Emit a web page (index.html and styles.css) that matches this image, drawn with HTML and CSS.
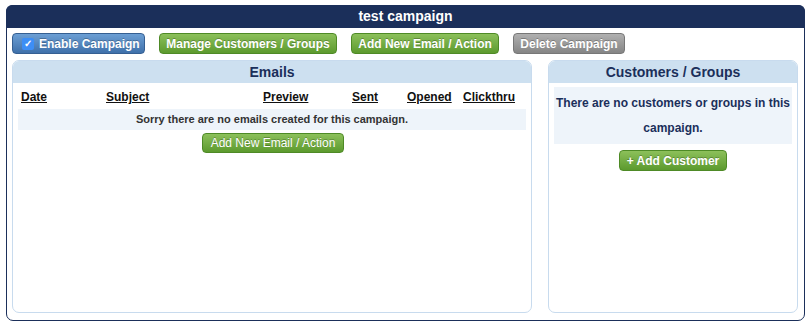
FILE: index.html
```html
<!DOCTYPE html>
<html>
<head>
<meta charset="utf-8">
<link rel="stylesheet" href="styles.css">
</head>
<body>
<div class="campaign">
  <div class="title">test campaign</div>
  <div class="toolbar">
    <button class="btn blue"><span class="check">&#10003;</span>Enable Campaign</button>
    <button class="btn green">Manage Customers / Groups</button>
    <button class="btn green">Add New Email / Action</button>
    <button class="btn grey">Delete Campaign</button>
  </div>
  <div class="panels">
    <div class="panel emails">
      <div class="panel-head">Emails</div>
      <div class="table">
        <div class="thead">
          <span>Date</span><span>Subject</span><span>Preview</span><span>Sent</span><span>Opened</span><span>Clickthru</span>
        </div>
        <div class="empty-row">Sorry there are no emails created for this campaign.</div>
      </div>
      <div class="center"><button class="btn green small">Add New Email / Action</button></div>
    </div>
    <div class="panel customers">
      <div class="panel-head">Customers / Groups</div>
      <div class="notice">There are no customers or groups in this campaign.</div>
      <div class="center"><button class="btn green cust">+ Add Customer</button></div>
    </div>
  </div>
</div>
</body>
</html>
```
FILE: styles.css
```css
* { box-sizing: border-box; }
body {
  margin: 0;
  background: #fff;
  font-family: "Liberation Sans", Arial, sans-serif;
}
.campaign {
  margin: 5px 0 0 6px;
  width: 799px;
  height: 316px;
  border: 1px solid #1b2f5a;
  border-radius: 7px;
  display: flex;
  flex-direction: column;
}
.title {
  background: #1b2f5a;
  color: #fff;
  font-weight: bold;
  font-size: 14px;
  text-align: center;
  height: 23px;
  line-height: 23px;
  border-radius: 6px 6px 0 0;
  margin: -1px -1px 0 -1px;
}
.toolbar {
  display: flex;
  gap: 14px;
  padding: 5px 0 0 5px;
}
.btn {
  font-family: "Liberation Sans", Arial, sans-serif;
  font-weight: bold;
  font-size: 12px;
  color: #fff;
  height: 21px;
  padding: 0 7px;
  border-radius: 4px;
  border: 1px solid;
  text-shadow: 0 -1px 0 rgba(0,0,0,0.25);
  display: inline-flex;
  align-items: center;
  white-space: nowrap;
  flex-shrink: 0;
}
.blue {
  background: linear-gradient(#6c9fd4, #3f70aa);
  border-color: #355f92;
  width: 133px;
  padding: 0 0 0 9px;
}
.check {
  display: inline-flex;
  width: 12px;
  height: 12px;
  background: #3d8ef5;
  border-radius: 2px;
  font-size: 10px;
  align-items: center;
  justify-content: center;
  margin-right: 5px;
  text-shadow: none;
}
.green {
  background: linear-gradient(#8cc05a, #5c9a2e);
  border-color: #4e8a26;
}
.grey {
  background: linear-gradient(#b0b0b0, #858585);
  border-color: #777;
}
.toolbar .green:nth-child(2) { width: 178px; justify-content: center; }
.toolbar .green:nth-child(3) { width: 148px; justify-content: center; }
.toolbar .grey { width: 112px; justify-content: center; }
.panels {
  display: flex;
  gap: 16px;
  padding: 6px 0 0 5px;
}
.panel {
  border: 1px solid #c8dbee;
  border-radius: 7px;
  height: 253px;
}
.emails { width: 520px; }
.customers { width: 250px; }
.panel-head {
  background: #cde0f0;
  color: #1b2f5a;
  font-weight: bold;
  font-size: 14px;
  text-align: center;
  height: 22px;
  line-height: 23px;
  border-radius: 6px 6px 0 0;
}
.table {
  margin: 6px 5px 0 5px;
}
.thead {
  display: grid;
  grid-template-columns: 85px 157px 89px 55px 56px 1fr;
  padding: 1px 0 0 3px;
  height: 20px;
  font-size: 12px;
  font-weight: bold;
  color: #111;
}
.thead span { text-decoration: underline; line-height: 14px; }
.empty-row {
  background: #eef4fa;
  height: 21px;
  line-height: 21px;
  text-align: center;
  font-size: 11px;
  font-weight: bold;
  color: #333;
}
.center {
  display: flex;
  justify-content: center;
}
.small {
  margin-top: 3px;
  font-weight: normal;
  height: 20px;
  width: 142px;
  justify-content: center;
  font-size: 12px;
  margin-left: 2px;
}
.notice {
  margin: 4px 5px 0 5px;
  background: #eef4fa;
  height: 57px;
  padding-top: 4px;
  text-align: center;
  font-size: 12px;
  font-weight: bold;
  color: #1b2f5a;
  line-height: 25px;
}
.cust {
  margin-top: 6px;
  width: 108px;
  justify-content: center;
}
```
